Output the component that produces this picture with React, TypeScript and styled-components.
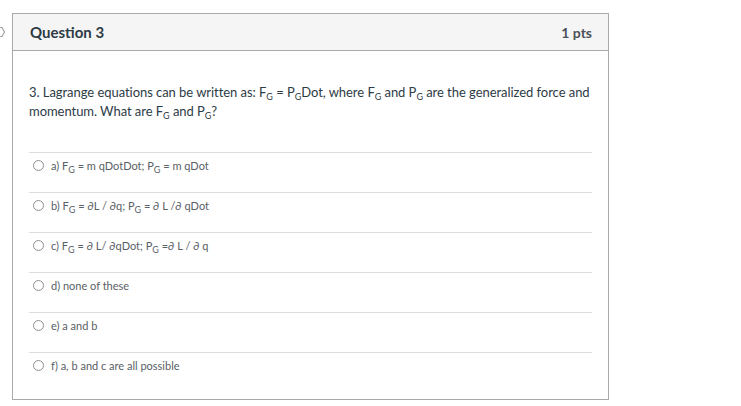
import styled, { createGlobalStyle } from 'styled-components';

interface Answer {
  id: string;
  parts: (string | { sub: string })[];
}

const answers: Answer[] = [
  { id: 'a', parts: ['a) F', { sub: 'G' }, ' = m qDotDot; P', { sub: 'G' }, ' = m qDot'] },
  { id: 'b', parts: ['b) F', { sub: 'G' }, ' =  \u2202L / \u2202q; P', { sub: 'G' }, ' = \u2202 L /\u2202 qDot'] },
  { id: 'c', parts: ['c) F', { sub: 'G' }, ' = \u2202 L/ \u2202qDot; P', { sub: 'G' }, ' =\u2202 L / \u2202 q'] },
  { id: 'd', parts: ['d) none of these'] },
  { id: 'e', parts: ['e) a and b'] },
  { id: 'f', parts: ['f) a, b and c are all possible'] },
];

const GlobalStyle = createGlobalStyle`
  html, body {
    margin: 0;
    padding: 0;
    background: #fff;
  }
  body {
    font-family: Lato, "Open Sans", "Liberation Sans", sans-serif;
    color: #2d3b45;
  }
`;

const Page = styled.div`
  display: flex;
  align-items: flex-start;
  padding-top: 13px;
`;

const FlagCol = styled.div`
  width: 12px;
  flex-shrink: 0;
  display: flex;
  justify-content: flex-start;
  padding-top: 13px;
  overflow: hidden;
`;

const Panel = styled.div`
  width: 595px;
  border: 1px solid #aaaaaa;
  background: #fff;
`;

const Header = styled.div`
  display: flex;
  align-items: center;
  justify-content: space-between;
  height: 36px;
  padding: 0 16px;
  background: #f5f5f5;
  border-bottom: 1px solid #aaaaaa;
`;

const HeaderTitle = styled.span`
  font-size: 15px;
  font-weight: 700;
  color: #2d3b45;
  padding-left: 1px;
`;

const Points = styled.span`
  font-size: 14px;
  font-weight: 700;
  color: #4a5158;
`;

const Body = styled.div`
  padding: 32px 16px 7px 16px;
`;

const QuestionText = styled.p`
  margin: 0 -8px 31px 0;
  font-size: 13px;
  line-height: 19px;
  letter-spacing: -0.05px;
  color: #2d3b45;
`;

const Sub = styled.sub`
  font-size: 9px;
  vertical-align: -3px;
  line-height: 0;
`;

const AnswerList = styled.div`
  display: flex;
  flex-direction: column;
`;

const AnswerRow = styled.label`
  display: flex;
  align-items: center;
  gap: 7px;
  height: 40px;
  box-sizing: border-box;
  border-top: 1px solid #dddddd;
  padding: 0 0 14px 4px;
  font-size: 11px;
  color: #596066;
  cursor: pointer;
`;

const Radio = styled.span`
  width: 9px;
  height: 9px;
  border: 1px solid #8a8f93;
  border-radius: 50%;
  background: #fff;
  flex-shrink: 0;
`;

function renderParts(parts: Answer['parts']) {
  return parts.map((p, i) =>
    typeof p === 'string' ? <span key={i}>{p}</span> : <Sub key={i}>{p.sub}</Sub>
  );
}

export default function App() {
  return (
    <>
      <GlobalStyle />
      <Page>
        <FlagCol>
          <svg width="12" height="12" viewBox="0 0 12 12">
            <path d="M-4 1.5 L2 1.5 L4.5 6 L2 10.5 L-4 10.5" fill="none" stroke="#a0a4a8" strokeWidth="1.2" />
          </svg>
        </FlagCol>
        <Panel>
          <Header>
            <HeaderTitle>Question 3</HeaderTitle>
            <Points>1 pts</Points>
          </Header>
          <Body>
            <QuestionText>
              3. Lagrange equations can be written as: F<Sub>G</Sub> = P<Sub>G</Sub>Dot, where F<Sub>G</Sub> and P
              <Sub>G</Sub> are the generalized force and momentum. What are F<Sub>G</Sub> and P<Sub>G</Sub>?
            </QuestionText>
            <AnswerList>
              {answers.map((a) => (
                <AnswerRow key={a.id}>
                  <Radio />
                  <span>{renderParts(a.parts)}</span>
                </AnswerRow>
              ))}
            </AnswerList>
          </Body>
        </Panel>
      </Page>
    </>
  );
}
